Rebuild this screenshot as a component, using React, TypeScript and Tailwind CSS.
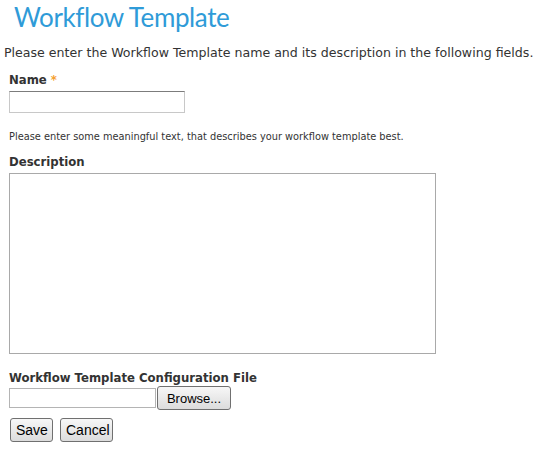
import { useState } from 'react';

const WorkflowTemplatePage = () => {
  const [form, setForm] = useState({ name: '', description: '' });

  const btn =
    "h-[24px] px-[5px] border border-[#707070] rounded-[3px] bg-gradient-to-b from-[#f7f7f7] to-[#dcdcdc] text-black font-['Liberation_Sans',Arial,sans-serif] leading-none";

  return (
    <div className="w-[549px] h-[456px] bg-white text-[#333] font-['DejaVu_Sans',Verdana,sans-serif] overflow-hidden">
      <h1 className="h-[44px] pl-[14px] text-[26px] leading-[34px] tracking-[-0.4px] text-[#2f9bd8] font-['Lato',sans-serif]">
        Workflow Template
      </h1>
      <p className="pl-[4px] h-[18px] text-[12.6px] leading-[18px] whitespace-nowrap">
        Please enter the Workflow Template name and its description in the following fields.
      </p>

      <form className="pl-[9px]" onSubmit={(e) => e.preventDefault()}>
        {/* Name */}
        <label htmlFor="wt-name" className="block mt-[11px] h-[14px] text-[11.7px] leading-[14px] font-bold">
          Name <span className="text-[#f5a030]">*</span>
        </label>
        <input
          id="wt-name"
          type="text"
          value={form.name}
          onChange={(e) => setForm((prev) => ({ ...prev, name: e.target.value }))}
          className="block mt-[4px] w-[176px] h-[22px] border border-[#c8c8c8] border-t-[#7c7c7c] outline-none"
        />

        <p className="mt-[17px] h-[14px] text-[9.8px] leading-[14px] whitespace-nowrap">
          Please enter some meaningful text, that describes your workflow template best.
        </p>

        {/* Description */}
        <label htmlFor="wt-desc" className="block mt-[11px] h-[14px] text-[11.7px] leading-[14px] font-bold">
          Description
        </label>
        <textarea
          id="wt-desc"
          value={form.description}
          onChange={(e) => setForm((prev) => ({ ...prev, description: e.target.value }))}
          className="block mt-[4px] w-[427px] h-[181px] border border-[#a9a9a9] outline-none resize-none"
        />

        {/* Config file */}
        <label className="block mt-[17px] h-[14px] text-[11.7px] leading-[14px] font-bold">
          Workflow Template Configuration File
        </label>
        <div className="flex items-center gap-[1px] mt-[3px] h-[20px]">
          <div className="w-[147px] h-[20px] border border-[#b4b4b4]" />
          <button type="button" className={btn + " w-[74px] h-[20px] text-[13px]"}>
            Browse...
          </button>
        </div>

        <div className="flex gap-[7px] mt-[10px] pl-[1px]">
          <button type="submit" className={btn + " w-[43px] text-[14px]"}>
            Save
          </button>
          <button type="button" className={btn + " w-[53px] text-[14px]"}>
            Cancel
          </button>
        </div>
      </form>
    </div>
  );
};

export default function App() {
  return <WorkflowTemplatePage />;
}
